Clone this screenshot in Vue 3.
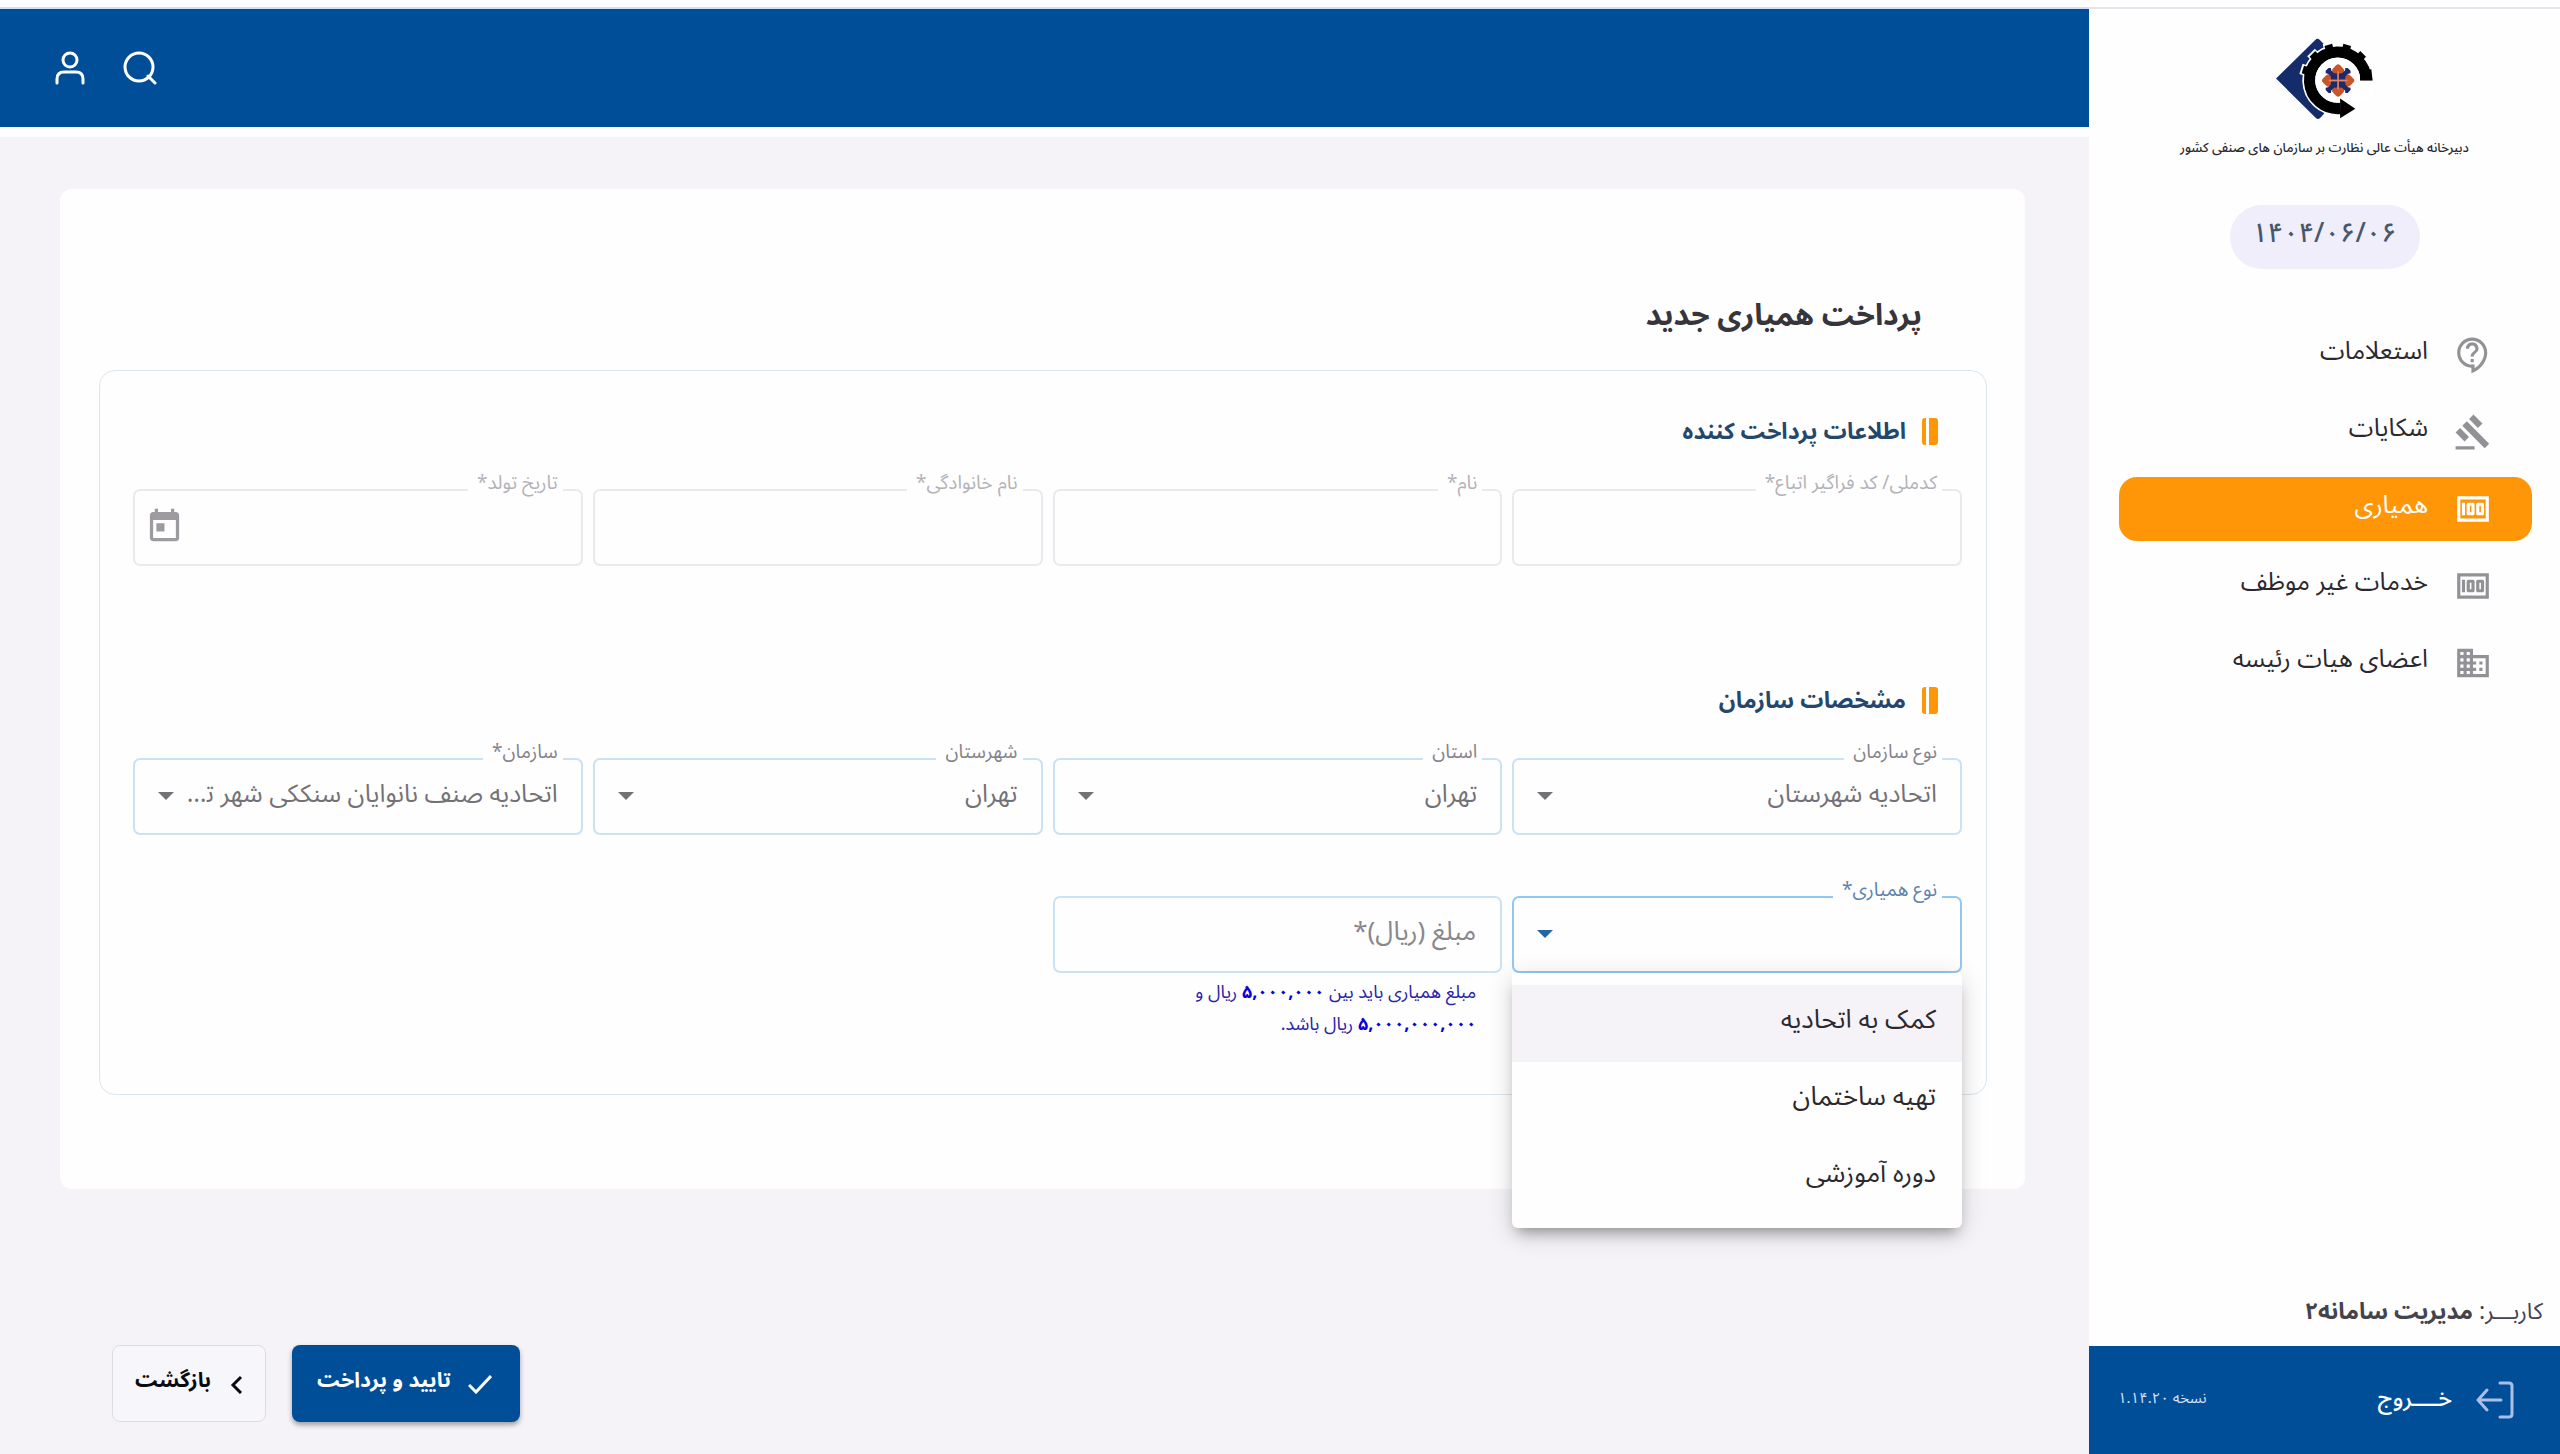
<template>
  <div class="page" dir="rtl">
    <aside class="sidebar">
      <div class="brand">
        <svg class="logo" viewBox="50 20 295 250" aria-hidden="true">
          <path fill="#152c6b" d="M50 145 L168 29 Q175 22 182 29 L196 43 L230 150 L194 252 L182 265 Q176 270 170 264 Z" />
          <path fill="none" stroke="#fff" stroke-width="46" d="M320 150 A84 84 0 1 0 240 234" />
          <rect
            v-for="angle in teeth"
            :key="'gap' + angle"
            x="220" y="34" width="32" height="30" fill="#fff"
            :transform="`rotate(${angle} 236 150)`"
          />
          <path fill="none" stroke="#000" stroke-width="34" d="M321 150 A85 85 0 1 0 244 235" />
          <rect
            v-for="angle in teeth"
            :key="angle"
            x="224" y="40" width="24" height="22"
            :transform="`rotate(${angle} 236 150)`"
          />
          <circle cx="236" cy="150" r="68" fill="#fff" />
          <path fill="#fff" d="M236 150 L345 152 L345 200 L275 220 L243 202 Z" />
          <path d="M303 122 L337 117 L341 151 H303 Z M243 205 L289 236 L243 265 Z" />
          <g transform="translate(237 151)">
            <path fill="#c9562a" d="M0 -49 Q5 -49 18 -33 L18 -18 L33 -18 Q49 -5 49 0 Q49 5 33 18 L18 18 L18 33 Q5 49 0 49 Q-5 49 -18 33 L-18 18 L-33 18 Q-49 5 -49 0 Q-49 -5 -33 -18 L-18 -18 L-18 -33 Q-5 -49 0 -49 Z" />
            <g v-for="angle in [45, 135, 225, 315]" :key="angle" :transform="`rotate(${angle})`">
              <path fill="#1c2a6b" d="M0 -3 L-13 -17 L-7 -24 L-7 -36 L-11 -42 L-6 -47 L6 -47 L11 -42 L7 -36 L7 -24 L13 -17 Z" />
            </g>
            <path stroke="#d98a70" stroke-width="4" d="M0 -28 V28 M-28 0 H28" />
          </g>
        </svg>
        <p class="brand-name">دبیرخانه هیأت عالی نظارت بر سازمان های صنفی کشور</p>
        <time class="date">۱۴۰۴/۰۶/۰۶</time>
      </div>

      <nav class="menu">
        <a
          v-for="item in menu"
          :key="item.title"
          href="#"
          class="menu-item"
          :class="{ 'active': item.active }"
        >
          <svg viewBox="0 0 24 24" aria-hidden="true"><path :d="item.icon" /></svg>
          <span>{{ item.title }}</span>
        </a>
      </nav>

      <p class="user">کاربـــر: <b>مدیریت سامانه۲</b></p>
      <div class="sidebar-footer">
        <button type="button" class="logout">
          <svg viewBox="0 0 38 38" aria-hidden="true">
            <path d="M24 2 H33 Q36 2 36 5 V33 Q36 36 33 36 H24 M25 19 H2 M11 9 L2 19 L11 29" />
          </svg>
          <span>خــــروج</span>
        </button>
        <span class="version">نسخه ۱.۱۴.۲۰</span>
      </div>
    </aside>

    <div class="content">
      <header class="topbar">
        <button type="button" aria-label="جستجو">
          <svg viewBox="0 0 34 34" aria-hidden="true"><path d="M25 25 L32 32" /><circle cx="16" cy="16" r="14" /></svg>
        </button>
        <button type="button" aria-label="حساب کاربری">
          <svg viewBox="0 0 34 34" aria-hidden="true"><circle cx="17" cy="9" r="7" /><path d="M4 32 V28 Q4 21 11 21 H23 Q30 21 30 28 V32" /></svg>
        </button>
      </header>

      <main>
        <form class="form" @submit.prevent>
          <div class="card">
            <h1>پرداخت همیاری جدید</h1>
            <div class="panel">
              <h2>اطلاعات پرداخت کننده</h2>
              <div class="grid payer">
                <div v-for="field in payerFields" :key="field.id" class="field disabled">
                  <input :id="field.id" type="text" disabled>
                  <label :for="field.id">{{ field.label }}</label>
                  <svg v-if="field.date" class="calendar" viewBox="0 0 24 24" aria-hidden="true">
                    <path d="M19 3h-1V1h-2v2H8V1H6v2H5c-1.11 0-1.99.9-1.99 2L3 19c0 1.1.89 2 2 2h14c1.1 0 2-.9 2-2V5c0-1.1-.9-2-2-2zm0 16H5V8h14v11zM7 10h5v5H7z" />
                  </svg>
                </div>
              </div>

              <h2>مشخصات سازمان</h2>
              <div class="grid">
                <div v-for="field in orgFields" :key="field.id" class="field">
                  <select :id="field.id" :value="field.value">
                    <option>{{ field.value }}</option>
                  </select>
                  <label :for="field.id">{{ field.label }}</label>
                  <span class="arrow"></span>
                </div>

                <div class="field open">
                  <select id="aidType" v-model="aidType">
                    <option value=""></option>
                    <option v-for="option in aidTypes" :key="option">{{ option }}</option>
                  </select>
                  <label for="aidType">نوع همیاری*</label>
                  <span class="arrow"></span>
                  <ul class="options" role="listbox">
                    <li
                      v-for="(option, index) in aidTypes"
                      :key="option"
                      role="option"
                      :class="{ 'hovered': index === 0 }"
                      @click="aidType = option"
                    >{{ option }}</li>
                  </ul>
                </div>
                <div class="field">
                  <input id="amount" type="text" placeholder="مبلغ (ریال)*" aria-label="مبلغ (ریال)">
                  <p class="note">
                    مبلغ همیاری باید بین <b>۵,۰۰۰,۰۰۰</b> ریال و<br>
                    <b>۵,۰۰۰,۰۰۰,۰۰۰</b> ریال باشد.
                  </p>
                </div>
              </div>
            </div>
          </div>

          <div class="actions">
            <button type="submit" class="btn primary">
              <svg viewBox="0 0 24 20" aria-hidden="true"><path d="M1 11 L8 18 L23 2" /></svg>
              تایید و پرداخت
            </button>
            <button type="button" class="btn back">
              <svg viewBox="0 0 24 20" aria-hidden="true"><path d="M17 3 L9 11 L17 19" /></svg>
              بازگشت
            </button>
          </div>
        </form>
      </main>
    </div>
  </div>
</template>

<script setup>
import { ref } from 'vue'

// angles of the gear teeth in the logo
const teeth = [-73, -44, -15, 15, 44]

const moneyIcon = 'M15 16h3c.55 0 1-.45 1-1V9c0-.55-.45-1-1-1h-3c-.55 0-1 .45-1 1v6c0 .55.45 1 1 1zm1-6h1v4h-1v-4zM9 16h3c.55 0 1-.45 1-1V9c0-.55-.45-1-1-1H9c-.55 0-1 .45-1 1v6c0 .55.45 1 1 1zm1-6h1v4h-1v-4zM5 8h2v8H5zM2 4v16h20V4H2zm18 14H4V6h16v12z'

const menu = [
  { title: 'استعلامات', icon: 'M11 23.59v-3.6c-5.01-.26-9-4.42-9-9.49C2 5.26 6.26 1 11.5 1S21 5.26 21 10.5c0 4.95-3.44 9.93-8.57 12.4l-1.43.69zM11.5 3C7.36 3 4 6.36 4 10.5S7.36 18 11.5 18H13v2.3c3.64-2.3 6-6.08 6-9.8C19 6.36 15.64 3 11.5 3zm-1 11.5h2v2h-2zm2-1.5h-2c0-3.25 3-3 3-5 0-1.1-.9-2-2-2s-2 .9-2 2h-2c0-2.21 1.79-4 4-4s4 1.79 4 4c0 2.5-3 2.75-3 5z' },
  { title: 'شکایات', icon: 'M1 21h12v2H1zM5.245 8.07l2.83-2.827 14.14 14.142-2.828 2.828zM12.317 1l5.657 5.656-2.83 2.83-5.654-5.66zM3.825 9.485l5.657 5.657-2.828 2.828-5.657-5.657z' },
  { title: 'همیاری', icon: moneyIcon, active: true },
  { title: 'خدمات غیر موظف', icon: moneyIcon },
  { title: 'اعضای هیات رئیسه', icon: 'M12 7V3H2v18h20V7H12zM6 19H4v-2h2v2zm0-4H4v-2h2v2zm0-4H4V9h2v2zm0-4H4V5h2v2zm4 12H8v-2h2v2zm0-4H8v-2h2v2zm0-4H8V9h2v2zm0-4H8V5h2v2zm10 12h-8v-2h2v-2h-2v-2h2v-2h-2V9h8v10zm-2-8h-2v2h2v-2zm0 4h-2v2h2v-2z' }
]

const payerFields = [
  { id: 'nationalCode', label: 'کدملی/ کد فراگیر اتباع*' },
  { id: 'firstName', label: 'نام*' },
  { id: 'lastName', label: 'نام خانوادگی*' },
  { id: 'birthDate', label: 'تاریخ تولد*', date: true }
]

const orgFields = [
  { id: 'orgType', label: 'نوع سازمان', value: 'اتحادیه شهرستان' },
  { id: 'province', label: 'استان', value: 'تهران' },
  { id: 'city', label: 'شهرستان', value: 'تهران' },
  { id: 'organization', label: 'سازمان*', value: 'اتحادیه صنف نانوایان سنککی شهر تهران' }
]

const aidTypes = ['کمک به اتحادیه', 'تهیه ساختمان', 'دوره آموزشی']
const aidType = ref('')
</script>

<style>
body {
  margin: 0;
}
</style>

<style scoped>
.page {
  display: flex;
  min-height: 100vh;
  box-sizing: border-box;
  padding-top: 7px;
  background: #fefdff;
  font-family: 'Noto Sans Arabic', 'DejaVu Sans', sans-serif;
  font-size: 25px;
  color: #2b292f;
}

.page *,
.page *::before {
  box-sizing: border-box;
}

h1, h2, p, ul {
  margin: 0;
  padding: 0;
}

button, input, select {
  font: inherit;
  color: inherit;
}

button {
  cursor: pointer;
}

/* sidebar */
.sidebar {
  flex: 0 0 471px;
  display: flex;
  flex-direction: column;
  border-top: 2px solid #e6e4ea;
  background: #fefefe;
}

.brand {
  display: flex;
  flex-direction: column;
  align-items: center;
  padding-top: 28px;
}

.logo {
  width: 98px;
  height: 83px;
}

.brand-name {
  margin-top: 8px;
  line-height: 40px;
  font-size: 13px;
  font-weight: 500;
  white-space: nowrap;
}

.date {
  width: 190px;
  height: 64px;
  margin-top: 37px;
  border-radius: 32px;
  background: #efeefa;
  color: #48586c;
  font-size: 27px;
  font-weight: 500;
  line-height: 58px;
  text-align: center;
}

.menu {
  display: flex;
  flex-direction: column;
  gap: 13px;
  padding: 54px 28px 0 30px;
}

.menu-item {
  display: flex;
  align-items: center;
  gap: 26px;
  height: 64px;
  padding-right: 40px;
  border-radius: 18px;
  color: #2b292f;
  text-decoration: none;
}

.menu-item svg {
  width: 38px;
  height: 38px;
  fill: #929196;
}

.menu-item span {
  padding-bottom: 8px;
}

.menu-item.active {
  background: #ff9608;
  color: #fff;
}

.menu-item.active svg {
  fill: #fff;
}

.user {
  margin-top: auto;
  padding: 0 17px 14px;
  font-size: 23px;
  line-height: 40px;
  color: #45434b;
}

.sidebar-footer {
  display: flex;
  align-items: center;
  justify-content: space-between;
  height: 108px;
  padding: 0 46px 0 29px;
  background: #004e98;
  color: #fff;
}

.logout {
  display: flex;
  align-items: center;
  gap: 24px;
  padding: 0;
  border: none;
  background: none;
  font-size: 23px;
  font-weight: 500;
}

.logout svg {
  width: 38px;
  height: 38px;
  fill: none;
  stroke: #a9bfe6;
  stroke-width: 3;
  stroke-linecap: round;
  stroke-linejoin: round;
}

.logout span {
  padding-bottom: 4px;
}

.version {
  padding-bottom: 4px;
  font-size: 15px;
  color: #d3e2f5;
}

/* main column */
.content {
  flex: 1;
  min-width: 0;
  display: flex;
  flex-direction: column;
}

.topbar {
  display: flex;
  align-items: center;
  justify-content: flex-end;
  gap: 36px;
  height: 130px;
  padding-left: 53px;
  border-top: 2px solid #cfe0f3;
  border-bottom: 10px solid #fefdff;
  background: #004e98;
}

.topbar button {
  padding: 0;
  border: none;
  background: none;
  line-height: 0;
}

.topbar svg {
  width: 34px;
  height: 34px;
  fill: none;
  stroke: #fff;
  stroke-width: 3;
  stroke-linecap: round;
}

main {
  flex: 1;
  padding: 52px 64px 32px 60px;
  background: #f5f3f7;
}

.card {
  padding: 97px 38px 94px 39px;
  border-radius: 12px;
  background: #fefefe;
}

h1 {
  padding-right: 65px;
  font-size: 30px;
  line-height: 60px;
  color: #37353b;
}

.panel {
  height: 725px;
  margin-top: 24px;
  padding: 40px 24px 0 33px;
  border: 1px solid #dae6f0;
  border-radius: 16px;
}

h2 {
  display: flex;
  align-items: center;
  height: 40px;
  padding-right: 24px;
  font-size: 23px;
  color: #24476b;
}

h2::before {
  content: '';
  width: 16px;
  height: 27px;
  margin-left: 16px;
  background: linear-gradient(to left, #ff9608 9px, transparent 9px, transparent 12px, #ff9608 12px);
  border-radius: 3px;
}

.grid {
  display: grid;
  grid-template-columns: repeat(4, 1fr);
  gap: 61px 10px;
  margin-top: 38px;
}

.payer {
  margin-bottom: 114px;
}

.field {
  position: relative;
  height: 77px;
}

.field input,
.field select {
  width: 100%;
  height: 77px;
  border: 2px solid #cbe1f5;
  border-radius: 7px;
  outline: none;
  background: transparent;
  color: #737176;
  appearance: none;
}

.field input {
  padding: 0 24px 6px 48px;
  font-size: 26px;
}

.field select {
  padding: 0 23px 6px 42px;
  overflow: hidden;
  text-overflow: ellipsis;
  white-space: nowrap;
}

.field input::placeholder {
  color: #89878c;
  opacity: 1;
}

.field label {
  position: absolute;
  top: -21px;
  right: 20px;
  padding: 0 5px 0 9px;
  background: #fefefe;
  font-size: 19px;
  line-height: 30px;
  color: #85838a;
}

.field.disabled input {
  border-color: #ebe9ed;
}

.field.disabled label {
  color: #b4b2b8;
}

.calendar {
  position: absolute;
  top: 18px;
  left: 12px;
  width: 39px;
  height: 39px;
  fill: #9d9ba0;
}

.arrow {
  position: absolute;
  top: 34px;
  left: 25px;
  border: 8px solid transparent;
  border-top-color: #737176;
  border-bottom: none;
}

.open select {
  border-color: #93c7f3;
}

.open label {
  color: #5c82ad;
}

.open .arrow {
  border-top-color: #2565a5;
}

.options {
  position: absolute;
  top: 77px;
  right: 0;
  left: 0;
  z-index: 2;
  padding: 12px 0;
  border-radius: 0 0 6px 6px;
  background: #fefefe;
  box-shadow: 0 10px 12px -6px rgba(0, 0, 0, 0.3), 0 6px 24px rgba(0, 0, 0, 0.18);
  list-style: none;
}

.options li {
  height: 77px;
  padding: 0 26px;
  font-size: 26px;
  line-height: 70px;
  cursor: pointer;
}

.options .hovered {
  background: #f5f3f7;
}

.note {
  padding: 3px 26px 0 0;
  font-size: 18px;
  line-height: 32px;
  color: #2a22ab;
}

.note b {
  color: #0a00e0;
}

/* form buttons */
.actions {
  display: flex;
  justify-content: flex-end;
  gap: 26px;
  margin-top: 156px;
  padding-left: 52px;
}

.btn {
  display: flex;
  align-items: center;
  justify-content: space-between;
  height: 77px;
  padding: 0 28px 8px 25px;
  border: 1px solid #dddce2;
  border-radius: 8px;
  font-size: 21px;
  font-weight: bold;
}

.btn svg {
  width: 24px;
  height: 20px;
  margin-top: 8px;
  fill: none;
  stroke: currentColor;
  stroke-width: 3;
}

.primary {
  width: 228px;
  border: none;
  background: #004e98;
  color: #fff;
  box-shadow: 0 3px 5px rgba(0, 0, 0, 0.35);
}

.back {
  width: 154px;
  padding-right: 17px;
  padding-left: 22px;
  background: #f6f6fb;
  color: #0c0b0e;
}
</style>
